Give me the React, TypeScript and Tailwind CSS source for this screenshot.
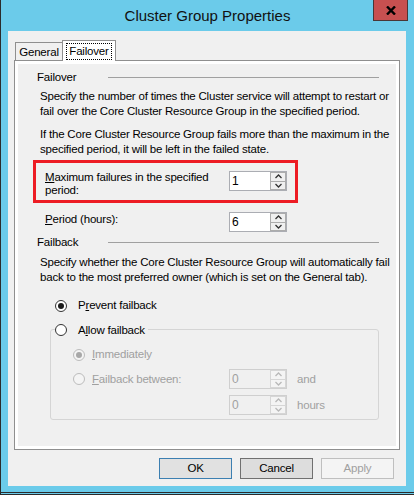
import React from 'react';

const Chevron: React.FC<{ up?: boolean; disabled?: boolean }> = ({ up, disabled }) => (
  <svg width="7" height="5" viewBox="0 0 7 5" className="block">
    <path
      d={up ? 'M0.5 4 L3.5 1 L6.5 4' : 'M0.5 1 L3.5 4 L6.5 1'}
      fill="none"
      stroke={disabled ? '#b8b8b8' : '#333'}
      strokeWidth="1.3"
    />
  </svg>
);

const Spinner: React.FC<{ value: string; disabled?: boolean }> = ({ value, disabled }) => (
  <div
    className={`flex h-[20px] w-[58px] shrink-0 border ${
      disabled ? 'border-[#cfcfcf]' : 'border-[#abadb3]'
    }`}
  >
    <div
      className={`flex-1 pl-[2px] text-[12px] leading-[18px] ${
        disabled ? 'bg-[#f0f0f0] text-[#a0a0a0]' : 'bg-white text-black'
      }`}
    >
      {value}
    </div>
    <div
      className={`flex w-[16px] flex-col gap-px p-px ${
        disabled ? 'bg-[#d6d6d6]' : 'bg-[#acacac]'
      }`}
    >
      <div className={`flex flex-1 items-center justify-center ${disabled ? 'bg-[#f4f4f4]' : 'bg-[#f0f0f0]'}`}>
        <Chevron up disabled={disabled} />
      </div>
      <div className={`flex flex-1 items-center justify-center ${disabled ? 'bg-[#f4f4f4]' : 'bg-[#f0f0f0]'}`}>
        <Chevron disabled={disabled} />
      </div>
    </div>
  </div>
);

const Radio: React.FC<{ checked?: boolean; disabled?: boolean }> = ({ checked, disabled }) => (
  <div
    className={`flex h-[12px] w-[12px] shrink-0 items-center justify-center rounded-full border ${
      disabled ? 'border-[#bcbcbc] bg-[#f4f4f4]' : 'border-[#333] bg-white'
    }`}
  >
    {checked && (
      <div className={`h-[6px] w-[6px] rounded-full ${disabled ? 'bg-[#a8a8a8]' : 'bg-[#1a1a1a]'}`} />
    )}
  </div>
);

const GroupHeading: React.FC<{ label: string; className?: string }> = ({ label, className }) => (
  <div className={`flex h-[15px] items-center pl-[19px] ${className ?? ''}`}>
    <div className="w-[71px]">{label}</div>
    <div className="h-px w-[271px] bg-[#a0a0a0]" />
  </div>
);

export default function App() {
  return (
    <div className="flex h-[495px] w-[414px] flex-col overflow-hidden border-l border-[#2b2b2b] bg-[#6bcbea] font-['Liberation_Sans',Arial,sans-serif] text-[11.5px] leading-[15px] tracking-[-0.2px] text-black">
      {/* title bar */}
      <div className="relative flex h-[31px] shrink-0 items-center justify-center">
        <span className="text-[15px] tracking-normal text-[#111]">Cluster Group Properties</span>
        <button className="absolute right-[6px] top-0 flex h-[21px] w-[35px] items-center justify-center border border-t-0 border-[#4a3636] bg-[#c75050]">
          <svg width="10" height="9" viewBox="0 0 10 9">
            <path d="M1 0.5 L9 8.5 M9 0.5 L1 8.5" stroke="#000" strokeWidth="2.4" />
          </svg>
        </button>
      </div>

      {/* client area */}
      <div className="ml-[7px] flex h-[455px] w-[398px] shrink-0 flex-col bg-[#f0f0f0] pl-[6px] pt-[9px]">
        {/* tabs */}
        <div className="flex h-[20px] items-end">
          <div className="ml-[1px] flex h-[18px] w-[48px] items-center justify-center border border-b-0 border-[#8f8f8f] bg-[#f0f0f0] pt-px">
            General
          </div>
          <div className="relative z-10 -mb-px -ml-px flex h-[21px] w-[54px] items-center justify-center border border-b-0 border-[#8f8f8f] bg-white">
            <div className="flex h-[17px] w-[46px] items-center justify-center border border-dotted border-black">
              Failover
            </div>
          </div>
        </div>

        {/* tab page */}
        <div className="flex h-[390px] w-[386px] flex-col border border-[#8f8f8f] bg-white p-[3px]">
          <div className="flex flex-1 flex-col bg-[#f0f0f0]">
            <GroupHeading label="Failover" className="mt-[6px]" />
            <p className="mt-[4px] whitespace-nowrap pl-[22px]">
              Specify the number of times the Cluster service will attempt to restart or
              <br />
              fail over the Core Cluster Resource Group in the specified period.
            </p>
            <p className="mt-[8px] whitespace-nowrap pl-[22px]">
              If the Core Cluster Resource Group fails more than the maximum in the
              <br />
              specified period, it will be left in the failed state.
            </p>

            <div className="ml-[15px] mt-[3px] flex h-[43px] w-[265px] items-start border-[3px] border-[#ed1c24] pl-[9px] pt-[8px]">
              <div className="w-[184px] whitespace-nowrap leading-[13px]">
                <span className="underline">M</span>aximum failures in the specified
                <br />
                period:
              </div>
              <Spinner value="1" />
            </div>

            <div className="mt-[9px] flex items-start pl-[27px]">
              <div className="w-[184px]">
                <span className="underline">P</span>eriod (hours):
              </div>
              <Spinner value="6" />
            </div>

            <GroupHeading label="Failback" className="mt-[3px]" />
            <p className="mt-[5px] whitespace-nowrap pl-[22px]">
              Specify whether the Core Cluster Resource Group will automatically fail
              <br />
              back to the most preferred owner (which is set on the General tab).
            </p>

            <div className="mt-[13px] flex h-[15px] items-center pl-[37px]">
              <Radio checked />
              <span className="ml-[11px]">
                P<span className="underline">r</span>event failback
              </span>
            </div>

            <div className="ml-[32px] mt-[16px] flex h-[91px] w-[329px] flex-col rounded-[3px] border border-[#d5d5d5]">
              <div className="-mt-[8px] ml-[4px] flex h-[16px] w-fit items-center bg-[#f0f0f0] pr-[3px]">
                <Radio />
                <span className="ml-[11px]">
                  A<span className="underline">l</span>low failback
                </span>
              </div>

              <div className="mt-[9px] flex h-[15px] items-center pl-[22px] text-[#a0a0a0]">
                <Radio checked disabled />
                <span className="ml-[7px]">
                  <span className="underline">I</span>mmediately
                </span>
              </div>

              <div className="mt-[7px] flex h-[20px] items-center text-[#a0a0a0]">
                <div className="flex w-[178px] items-center pl-[22px]">
                  <Radio disabled />
                  <span className="ml-[7px]">
                    <span className="underline">F</span>ailback between:
                  </span>
                </div>
                <Spinner value="0" disabled />
                <span className="ml-[10px]">and</span>
              </div>

              <div className="mt-[6px] flex h-[20px] items-center pl-[178px] text-[#a0a0a0]">
                <Spinner value="0" disabled />
                <span className="ml-[10px]">hours</span>
              </div>
            </div>
          </div>
        </div>

        {/* dialog buttons */}
        <div className="mt-[8px] flex justify-end gap-[8px] pr-[12px]">
          <button className="h-[21px] w-[73px] border border-[#3c7fb1] bg-[#e1e1e1]">OK</button>
          <button className="h-[21px] w-[73px] border border-[#707070] bg-[#dddddd]">Cancel</button>
          <button className="h-[21px] w-[73px] border border-[#bfbfbf] bg-[#f4f4f4] text-[#a0a0a0]">Apply</button>
        </div>
      </div>

      {/* lower frame */}
      <div className="h-[6px] shrink-0" />
      <div className="h-px shrink-0 bg-[#2b2b2b]" />
      <div className="h-px shrink-0" />
      <div className="h-px shrink-0 bg-[#2b2b2b]" />
    </div>
  );
}
